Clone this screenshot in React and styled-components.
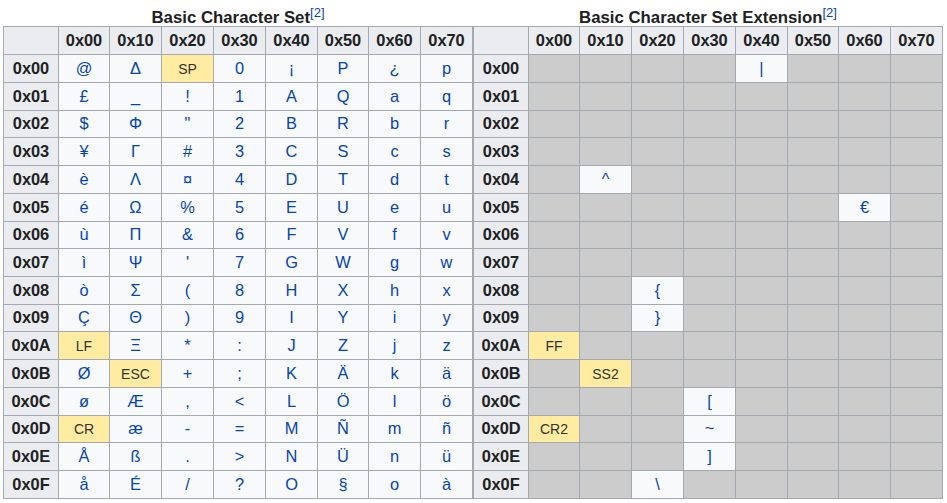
import React from 'react';
import styled, { createGlobalStyle } from 'styled-components';

const Global = createGlobalStyle`
  html, body { margin: 0; padding: 0; background: #fff; }
  body { font-family: "Liberation Sans", Arial, sans-serif; color: #202122; }
`;

const Page = styled.div`
  display: flex;
  align-items: flex-start;
  padding: 0 0 0 3px;
  width: 947px;
  height: 503px;
  box-sizing: border-box;
  overflow: hidden;
`;

const Table = styled.table`
  border-collapse: collapse;
  table-layout: fixed;
  flex: none;
  width: ${p => p.$width}px;
  font-size: 16px;
  background: #f8f9fa;
`;

const Caption = styled.caption`
  font-weight: 700;
  font-size: 16.8px;
  line-height: 20px;
  height: 26px;
  box-sizing: border-box;
  padding-top: 6px;
  text-align: center;
  white-space: nowrap;
  color: #202122;
`;

const Ref = styled.sup`
  font-weight: 400;
  font-size: 13px;
  line-height: 1;
  color: #0645ad;
  vertical-align: 6px;
`;

const Row = styled.tr`
  height: ${p => p.$h}px;
`;

const Head = styled.th`
  background: #eaecf0;
  border: 1px solid #a2a9b1;
  font-weight: 700;
  font-size: 16.4px;
  line-height: 18px;
  color: #202122;
  padding: 0 0 2px;
  text-align: center;
`;

const Cell = styled.td`
  border: 1px solid #a2a9b1;
  padding: 0 0 2px;
  text-align: center;
  font-size: 16.4px;
  line-height: 18px;
  color: #0645ad;
  background: #f8f9fa;
`;

const Control = styled(Cell)`
  padding: 0;
  background: #ffeca0;
  color: #333;
  font-size: 14px;
`;

const Empty = styled(Cell)`
  background: #ccc;
`;

const hx = n => '0x' + n.toString(16).toUpperCase().padStart(2, '0');
const COLS = [0, 16, 32, 48, 64, 80, 96, 112];
const CONTROL = new Set(['SP', 'LF', 'ESC', 'CR', 'FF', 'SS2', 'CR2']);
const ROW_H = [28, 28, 28, 27, 28, 28, 28, 27, 28, 28, 27, 28, 28, 28, 27, 28, 28];
const WIDTHS = [55, 51, 52, 52, 52, 52, 51, 52, 52];

const BASIC = [
  ['@', 'Δ', 'SP', '0', '¡', 'P', '¿', 'p'],
  ['£', '_', '!', '1', 'A', 'Q', 'a', 'q'],
  ['$', 'Φ', '"', '2', 'B', 'R', 'b', 'r'],
  ['¥', 'Γ', '#', '3', 'C', 'S', 'c', 's'],
  ['è', 'Λ', '¤', '4', 'D', 'T', 'd', 't'],
  ['é', 'Ω', '%', '5', 'E', 'U', 'e', 'u'],
  ['ù', 'Π', '&', '6', 'F', 'V', 'f', 'v'],
  ['ì', 'Ψ', "'", '7', 'G', 'W', 'g', 'w'],
  ['ò', 'Σ', '(', '8', 'H', 'X', 'h', 'x'],
  ['Ç', 'Θ', ')', '9', 'I', 'Y', 'i', 'y'],
  ['LF', 'Ξ', '*', ':', 'J', 'Z', 'j', 'z'],
  ['Ø', 'ESC', '+', ';', 'K', 'Ä', 'k', 'ä'],
  ['ø', 'Æ', ',', '<', 'L', 'Ö', 'l', 'ö'],
  ['CR', 'æ', '-', '=', 'M', 'Ñ', 'm', 'ñ'],
  ['Å', 'ß', '.', '>', 'N', 'Ü', 'n', 'ü'],
  ['å', 'É', '/', '?', 'O', '§', 'o', 'à'],
];

const e = '';
const EXT = [
  [e, e, e, e, '|', e, e, e],
  [e, e, e, e, e, e, e, e],
  [e, e, e, e, e, e, e, e],
  [e, e, e, e, e, e, e, e],
  [e, '^', e, e, e, e, e, e],
  [e, e, e, e, e, e, '€', e],
  [e, e, e, e, e, e, e, e],
  [e, e, e, e, e, e, e, e],
  [e, e, '{', e, e, e, e, e],
  [e, e, '}', e, e, e, e, e],
  ['FF', e, e, e, e, e, e, e],
  [e, 'SS2', e, e, e, e, e, e],
  [e, e, e, '[', e, e, e, e],
  ['CR2', e, e, '~', e, e, e, e],
  [e, e, e, ']', e, e, e, e],
  [e, e, '\\', e, e, e, e, e],
];

function CharTable({ title, rows }) {
  const total = WIDTHS.reduce((a, b) => a + b, 0);
  return (
    <Table $width={total}>
      <Caption>{title}<Ref>[2]</Ref></Caption>
      <colgroup>
        {WIDTHS.map((w, i) => <col key={i} style={{ width: w }} />)}
      </colgroup>
      <thead>
        <Row $h={ROW_H[0]}>
          <Head />
          {COLS.map(c => <Head key={c}>{hx(c)}</Head>)}
        </Row>
      </thead>
      <tbody>
        {rows.map((row, r) => (
          <Row key={r} $h={ROW_H[r + 1]}>
            <Head>{hx(r)}</Head>
            {row.map((v, c) => {
              if (v === '') return <Empty key={c} />;
              if (CONTROL.has(v)) return <Control key={c}>{v}</Control>;
              return <Cell key={c}>{v}</Cell>;
            })}
          </Row>
        ))}
      </tbody>
    </Table>
  );
}

export default function App() {
  return (
    <>
      <Global />
      <Page>
        <CharTable title="Basic Character Set" rows={BASIC} />
        <CharTable title="Basic Character Set Extension" rows={EXT} />
      </Page>
    </>
  );
}
